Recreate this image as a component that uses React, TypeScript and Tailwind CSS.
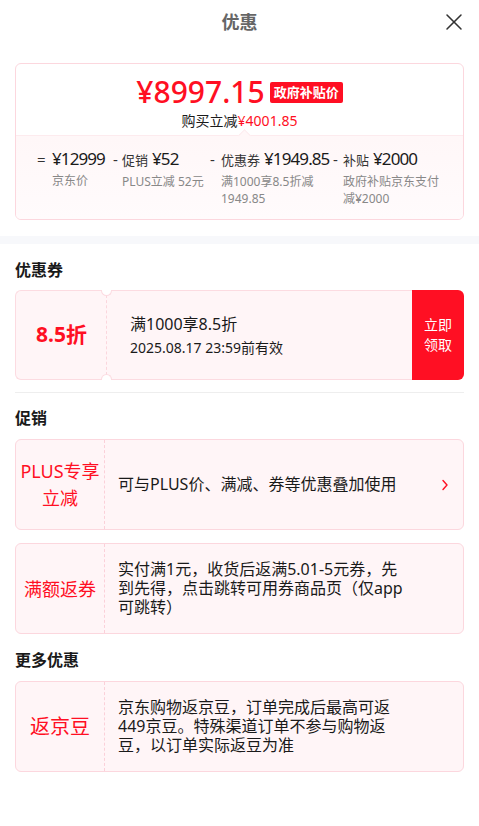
import { X } from 'lucide-react';

const font = { fontFamily: '"Noto Sans", "Noto Sans CJK SC", sans-serif' };

function Chevron() {
    return (
        <svg width="8" height="12" viewBox="0 0 8 12" fill="none">
            <path d="M2 1.5l4 4.5-4 4.5" stroke="#ff0f23" strokeWidth="1.4" strokeLinecap="round" strokeLinejoin="round" />
        </svg>
    );
}

function PriceItem({ sign, signW, label, value, sub, width, subW }: { sign: string; signW: string; label?: string; value: string; sub: string; width: string; subW: string }) {
    return (
        <div className={`flex ${width} shrink-0`}>
            <span className={`text-[15px] leading-[24px] text-[#333] ${signW} shrink-0`}>{sign}</span>
            <div className="min-w-0">
                <div className="flex items-baseline gap-[4px] leading-[24px] text-[#1a1a1a] whitespace-nowrap">
                    {label && <span className="text-[13px] text-[#333]">{label}</span>}
                    <span className="text-[17px] tracking-[-0.9px]">{value}</span>
                </div>
                <div className={`text-[12px] leading-[17px] text-[#888] mt-[1px] ${subW}`}>{sub}</div>
            </div>
        </div>
    );
}

function PriceCard() {
    return (
        <div className="mx-[15px] rounded-md border border-[#fcd7de] overflow-hidden">
            <div className="h-[71px] flex flex-col items-center pt-[11px]">
                <div className="flex items-center gap-[5px] h-[34px]">
                    <span className="text-[30px] leading-[34px] text-[#ff0f23] font-medium">¥8997.15</span>
                    <span className="bg-[#ff0f23] text-white text-[13px] leading-[21px] font-bold px-[4px] rounded-[2px]">政府补贴价</span>
                </div>
                <div className="text-[14px] leading-[20px] text-[#1a1a1a] mt-[2px]">
                    购买立减<span className="text-[#ff0f23]">¥4001.85</span>
                </div>
            </div>
            <div className="relative h-[84px] border-t border-[#fdebee] bg-gradient-to-b from-[#fff7f8] to-[#fffbfc] flex pl-[21px] pt-[11px]">
                <div className="absolute -top-[5px] left-[224px] w-[9px] h-[9px] rotate-45 bg-[#fff7f8] border-l border-t border-[#fdebee]" />
                <PriceItem sign="=" signW="w-[15px]" value="¥12999" sub="京东价" width="w-[76px]" subW="w-[56px]" />
                <PriceItem sign="-" signW="w-[9px]" label="促销" value="¥52" sub="PLUS立减 52元" width="w-[97px]" subW="w-[88px] whitespace-nowrap" />
                <PriceItem sign="-" signW="w-[11px]" label="优惠券" value="¥1949.85" sub="满1000享8.5折减 1949.85" width="w-[123px]" subW="w-[108px]" />
                <PriceItem sign="-" signW="w-[10px]" label="补贴" value="¥2000" sub="政府补贴京东支付减¥2000" width="w-[110px]" subW="w-[100px]" />
            </div>
        </div>
    );
}

function SectionTitle({ children }: { children: string }) {
    return <div className="px-[15px] text-[16px] leading-[22px] font-bold text-[#1a1a1a]">{children}</div>;
}

function Coupon() {
    return (
        <div className="mx-[15px] h-[90px] flex rounded-md">
            <div className="w-[92px] shrink-0 bg-[#fff5f7] border border-r-0 border-[#fcdbe1] rounded-l-md flex items-center justify-center">
                <span className="text-[21px] font-bold text-[#ff0f23]">8.5折</span>
            </div>
            <div className="relative flex-1 bg-[#fff5f7] border-y border-[#fcdbe1] flex flex-col justify-center pl-[23px]">
                {/* dashed tear line */}
                <div className="absolute top-[4px] bottom-[4px] -left-[1px] border-l border-dashed border-[#fbd6dd]" />
                <div className="absolute -top-[1px] -left-[6px] w-[11px] h-[6px] rounded-b-full bg-white border border-t-0 border-[#fcdbe1]" />
                <div className="absolute -bottom-[1px] -left-[6px] w-[11px] h-[6px] rounded-t-full bg-white border border-b-0 border-[#fcdbe1]" />
                <div className="text-[16px] leading-[22px] text-[#1a1a1a]">满1000享8.5折</div>
                <div className="text-[14px] leading-[20px] text-[#1a1a1a] mt-[3px]">2025.08.17 23:59前有效</div>
            </div>
            <div className="w-[52px] shrink-0 bg-[#ff0f23] rounded-r-md flex items-center justify-center">
                <span className="text-white text-[14px] leading-[20px] text-center w-[28px]">立即领取</span>
            </div>
        </div>
    );
}

function PromoCard({ tag, tagClass, text, arrow }: { tag: string; tagClass: string; text: string; arrow?: boolean }) {
    return (
        <div className="mx-[15px] h-[91px] flex rounded-md border border-[#fcd7de] bg-[#fff5f7]">
            <div className="w-[89px] shrink-0 border-r border-dashed border-[#fbd0d9] flex items-center justify-center">
                <span className={`text-[#ff0f23] text-center ${tagClass}`}>{tag}</span>
            </div>
            <div className="flex-1 flex items-center pl-[13px]">
                <div className="w-[285px] text-[16px] leading-[19px] text-[#1a1a1a]">{text}</div>
            </div>
            {arrow && (
                <div className="w-[34px] shrink-0 flex items-center justify-center pr-[2px]">
                    <Chevron />
                </div>
            )}
        </div>
    );
}

export default function App() {
    return (
        <div className="w-[479px] h-[826px] bg-white overflow-hidden" style={font}>
            <div className="relative h-[44px] flex items-center justify-center">
                <span className="text-[18px] font-bold text-[#666]">优惠</span>
                <X className="absolute right-[11px] top-[8px] w-[28px] h-[28px] text-[#333]" strokeWidth={1.3} />
            </div>
            <div className="pt-[19px]">
                <PriceCard />
            </div>
            <div className="h-[8px] bg-[#f7f8fb] mt-[16px]" />
            <div className="pt-[15px]">
                <SectionTitle>优惠券</SectionTitle>
            </div>
            <div className="mt-[9px]">
                <Coupon />
            </div>
            <div className="mx-[15px] mt-[12px] border-t border-[#eee]" />
            <div className="pt-[14px]">
                <SectionTitle>促销</SectionTitle>
            </div>
            <div className="mt-[10px] flex flex-col gap-[13px]">
                <PromoCard tag="PLUS专享立减" tagClass="text-[18px] leading-[27px] w-[82px]" text="可与PLUS价、满减、券等优惠叠加使用" arrow />
                <PromoCard tag="满额返券" tagClass="text-[18px] leading-[24px]" text="实付满1元，收货后返满5.01-5元券，先到先得，点击跳转可用券商品页（仅app可跳转）" />
            </div>
            <div className="pt-[15px]">
                <SectionTitle>更多优惠</SectionTitle>
            </div>
            <div className="mt-[10px]">
                <PromoCard tag="返京豆" tagClass="text-[20px] leading-[26px]" text="京东购物返京豆，订单完成后最高可返449京豆。特殊渠道订单不参与购物返豆，以订单实际返豆为准" />
            </div>
        </div>
    );
}
